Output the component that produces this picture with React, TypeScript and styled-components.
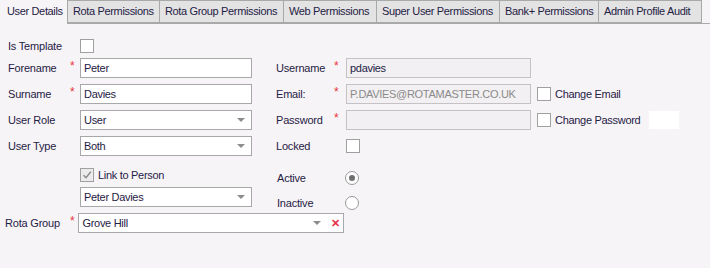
import React from "react";
import styled, { createGlobalStyle } from "styled-components";

const GlobalStyle = createGlobalStyle`
  html, body {
    margin: 0;
    padding: 0;
    background: #f7f4f7;
    font-family: "Liberation Sans", Arial, sans-serif;
    font-size: 11px;
    letter-spacing: -0.2px;
    color: #1f2145;
  }
`;

const tabs = [
  { label: "User Details", w: 68 },
  { label: "Rota Permissions", w: 92 },
  { label: "Rota Group Permissions", w: 124 },
  { label: "Web Permissions", w: 93 },
  { label: "Super User Permissions", w: 123 },
  { label: "Bank+ Permissions", w: 99 },
  { label: "Admin Profile Audit", w: 103 },
];

const Page = styled.div`
  width: 710px;
  height: 268px;
  overflow: hidden;
  background: #f7f4f7;
`;

const TabStrip = styled.div`
  display: flex;
  align-items: flex-end;
  height: 24px;
  border-bottom: 1px solid #a9a9a9;
  box-sizing: border-box;
`;

const Tab = styled.div<{ $active?: boolean; $w: number }>`
  box-sizing: border-box;
  width: ${(p) => p.$w}px;
  height: ${(p) => (p.$active ? 25 : 23)}px;
  margin-bottom: ${(p) => (p.$active ? -1 : 0)}px;
  padding-left: ${(p) => (p.$active ? 7 : 5)}px;
  padding-top: ${(p) => (p.$active ? 5 : 4)}px;
  background: ${(p) => (p.$active ? "#f7f4f7" : "#e3e3e3")};
  border: 1px solid #a9a9a9;
  border-left: ${(p) => (p.$active ? "none" : "1px solid #a9a9a9")};
  border-bottom: ${(p) => (p.$active ? "none" : "1px solid #a9a9a9")};
  border-top-color: ${(p) => (p.$active ? "#ececec" : "#a9a9a9")};
  white-space: nowrap;
  font-size: 11px;
  letter-spacing: -0.35px;
  color: #1f2145;
  & + & {
    border-left: none;
  }
`;

const Form = styled.div`
  padding: 15px 0 0 8px;
  display: flex;
  flex-direction: column;
`;

const Grid = styled.div`
  display: grid;
  grid-template-columns: 62px 10px 172px 24px 58px 12px 185px 6px auto;
  grid-auto-rows: 20px;
  row-gap: 6px;
  align-items: center;
`;

const TemplateRow = styled.div`
  display: flex;
  align-items: center;
  height: 14px;
  margin-bottom: 5px;
`;

const Label = styled.span<{ $w?: number }>`
  white-space: nowrap;
  width: ${(p) => (p.$w ? `${p.$w}px` : "auto")};
`;

const Star = styled.span`
  color: #e8343a;
  font-size: 12px;
  line-height: 1;
  position: relative;
  top: -2px;
`;

const Field = styled.div<{ $readOnly?: boolean; $muted?: boolean; $w?: number }>`
  box-sizing: border-box;
  height: 20px;
  width: ${(p) => (p.$w ? `${p.$w}px` : "auto")};
  border: 1px solid ${(p) => (p.$readOnly ? "#c4c2c4" : "#a8a8a8")};
  background: ${(p) => (p.$readOnly ? "#f2f0f2" : "#ffffff")};
  color: ${(p) => (p.$muted ? "#8a8a8a" : "#1f2145")};
  display: flex;
  align-items: center;
  padding: 0 4px 0 3px;
  font-size: 11px;
  letter-spacing: -0.3px;
  white-space: nowrap;
  overflow: hidden;
`;

const Value = styled.span`
  flex: 1;
`;

const Arrow = styled.span`
  width: 0;
  height: 0;
  border-left: 4px solid transparent;
  border-right: 4px solid transparent;
  border-top: 4px solid #8c8c8c;
  margin-right: 2px;
`;

const ClearX = styled.span`
  color: #e8344a;
  font-weight: bold;
  font-size: 11px;
  margin-left: 8px;
  line-height: 1;
`;

const Box = styled.span<{ $checked?: boolean }>`
  box-sizing: border-box;
  display: inline-flex;
  align-items: center;
  justify-content: center;
  width: 14px;
  height: 14px;
  border: 1px solid #a0a0a0;
  background: ${(p) => (p.$checked ? "#ebebeb" : "#ffffff")};
  flex: none;
`;

const Radio = styled.span<{ $on?: boolean }>`
  box-sizing: border-box;
  display: inline-flex;
  align-items: center;
  justify-content: center;
  width: 14px;
  height: 14px;
  border-radius: 50%;
  border: 1px solid #9a9a9a;
  background: #ffffff;
  &::after {
    content: "";
    display: ${(p) => (p.$on ? "block" : "none")};
    width: 6px;
    height: 6px;
    border-radius: 50%;
    background: #6f6f6f;
  }
`;

const CheckLabel = styled.label`
  display: flex;
  align-items: center;
  gap: 4px;
  white-space: nowrap;
  letter-spacing: -0.3px;
`;

const Blank = styled.span`
  display: block;
  width: 30px;
  height: 18px;
  background: #ffffff;
  margin-left: 5px;
`;

const Lower = styled.div`
  display: flex;
  margin-top: 12px;
`;

const LeftCol = styled.div`
  margin-left: 72px;
  width: 172px;
  display: flex;
  flex-direction: column;
  gap: 5px;
`;

const RightCol = styled.div`
  margin-left: 25px;
  margin-top: 3px;
  display: grid;
  grid-template-columns: 68px 14px;
  grid-auto-rows: 14px;
  row-gap: 11px;
  align-items: center;
`;

const RotaRow = styled.div`
  display: flex;
  align-items: center;
  margin-top: 3px;
  margin-left: -3px;
`;

const Gap = styled.span`
  width: 4px;
`;

const Check = () => (
  <svg width="10" height="10" viewBox="0 0 10 10">
    <path d="M1.5 5.2 L4 7.7 L8.8 1.8" fill="none" stroke="#8a8a8a" strokeWidth="1.4" />
  </svg>
);

export default function App() {
  return (
    <Page>
      <GlobalStyle />
      <TabStrip>
        {tabs.map((t, i) => (
          <Tab key={t.label} $w={t.w} $active={i === 0}>
            {t.label}
          </Tab>
        ))}
      </TabStrip>
      <Form>
        <TemplateRow>
          <Label $w={72}>Is Template</Label>
          <Box />
        </TemplateRow>
        <Grid>
          <Label>Forename</Label>
          <Star>*</Star>
          <Field>
            <Value>Peter</Value>
          </Field>
          <span />
          <Label>Username</Label>
          <Star>*</Star>
          <Field $readOnly>
            <Value>pdavies</Value>
          </Field>
          <span />
          <span />

          <Label>Surname</Label>
          <Star>*</Star>
          <Field>
            <Value>Davies</Value>
          </Field>
          <span />
          <Label>Email:</Label>
          <Star>*</Star>
          <Field $readOnly $muted>
            <Value>P.DAVIES@ROTAMASTER.CO.UK</Value>
          </Field>
          <span />
          <CheckLabel>
            <Box />
            Change Email
          </CheckLabel>

          <Label>User Role</Label>
          <span />
          <Field>
            <Value>User</Value>
            <Arrow />
          </Field>
          <span />
          <Label>Password</Label>
          <Star>*</Star>
          <Field $readOnly />
          <span />
          <CheckLabel>
            <Box />
            Change Password
            <Blank />
          </CheckLabel>

          <Label>User Type</Label>
          <span />
          <Field>
            <Value>Both</Value>
            <Arrow />
          </Field>
          <span />
          <Label>Locked</Label>
          <span />
          <Box />
          <span />
          <span />
        </Grid>
        <Lower>
          <LeftCol>
            <CheckLabel>
              <Box $checked>
                <Check />
              </Box>
              Link to Person
            </CheckLabel>
            <Field>
              <Value>Peter Davies</Value>
              <Arrow />
            </Field>
          </LeftCol>
          <RightCol>
            <Label>Active</Label>
            <Radio $on />
            <Label>Inactive</Label>
            <Radio />
          </RightCol>
        </Lower>
        <RotaRow>
          <Label $w={65}>Rota Group</Label>
          <Star>*</Star>
          <Gap />
          <Field $w={266}>
            <Value>Grove Hill</Value>
            <Arrow />
            <ClearX>✕</ClearX>
          </Field>
        </RotaRow>
      </Form>
    </Page>
  );
}
